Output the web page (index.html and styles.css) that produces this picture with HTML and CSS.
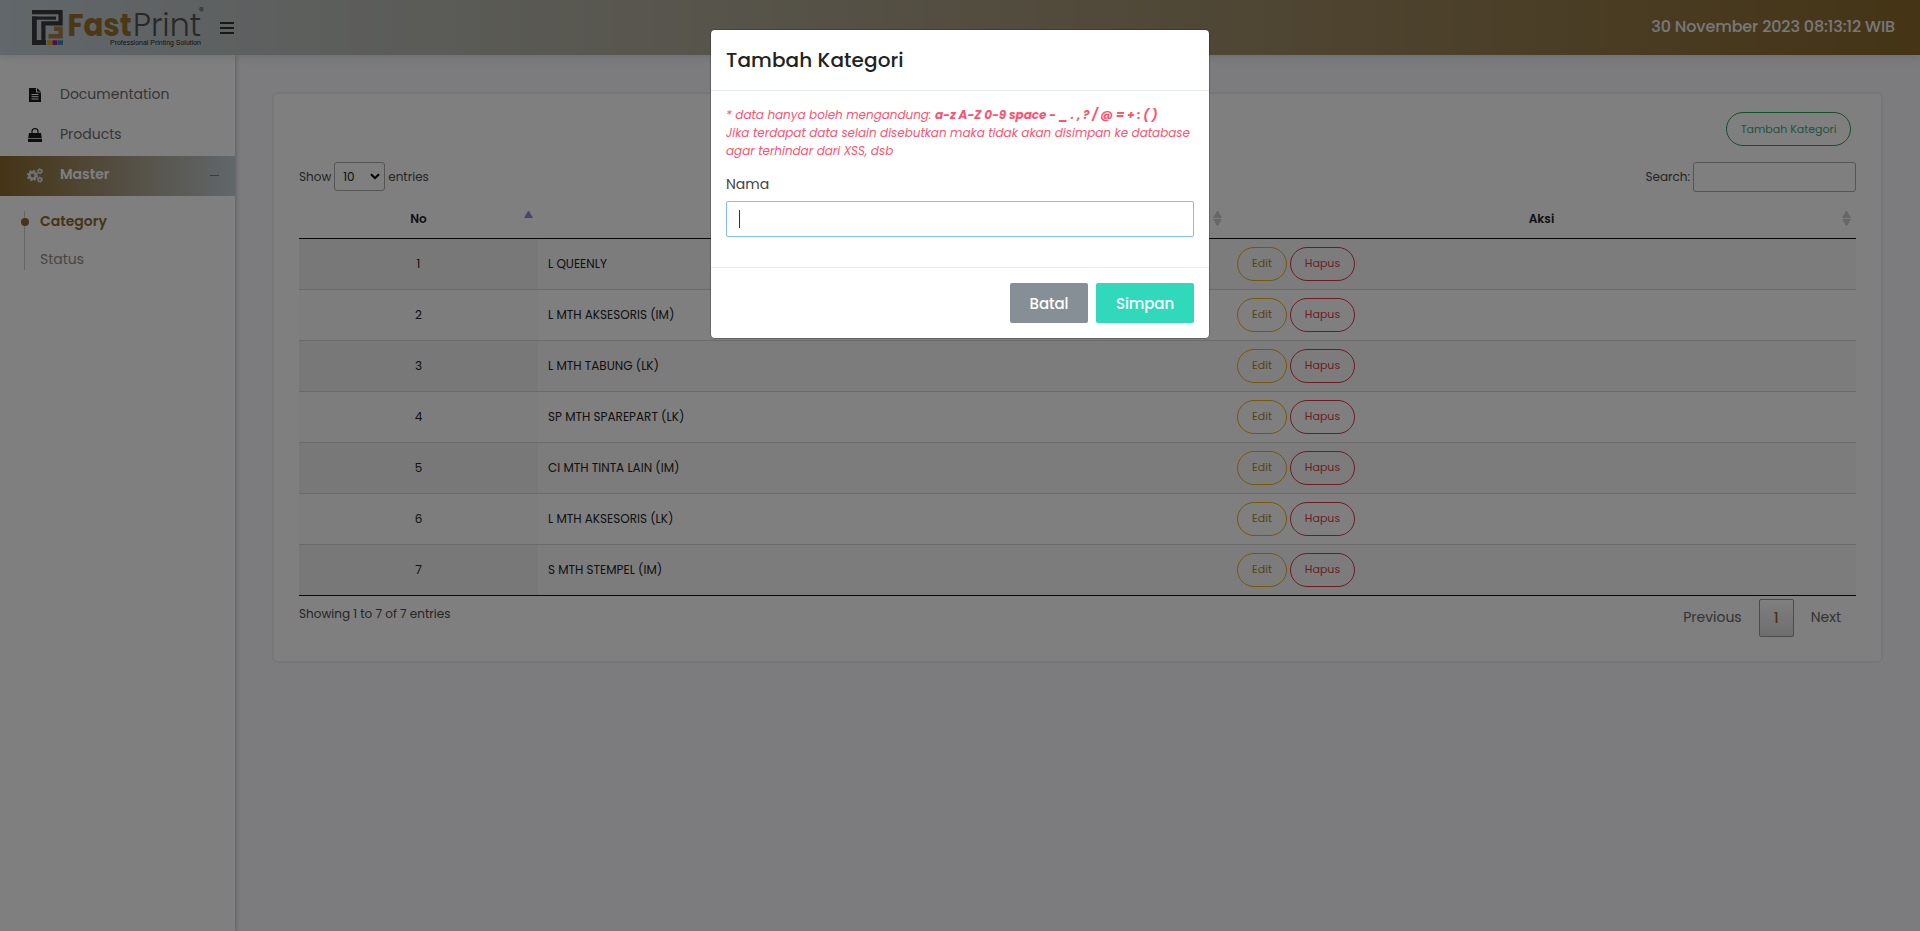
FILE: index.html
```html
<!DOCTYPE html>
<html lang="id">
<head>
<meta charset="utf-8">
<title>Kategori</title>
<link rel="stylesheet" href="styles.css">
</head>
<body>
<header class="topbar">
  <svg class="logo" width="180" height="44" viewBox="0 0 180 44">
    <g fill="none" stroke="#3a3a3a">
      <path stroke-width="4.200" d="M0 4.200H28.600V15.300H11.400V29.500"/>
      <path stroke-width="3.200" d="M0 10.100H24"/>
      <path stroke-width="4.800" d="M2.400 8.500V37M0 34.500H14"/>
      <path stroke-width="4" d="M11.400 29V36.900"/>
    </g>
    <path d="M28.600 18.500V28.300H16.500M30.800 20.700H22" fill="none" stroke="#a57b4c" stroke-width="4.400"/>
    <path fill="#d9a800" d="M15 32.300h5v4.600h-5z"/><path fill="#b5107a" d="M20.500 32.300h5v4.600h-5z"/><path fill="#2a86b9" d="M26 32.300h5v4.600h-5z"/>
    <text x="35.500" y="28" class="logo-fast" textLength="64" lengthAdjust="spacingAndGlyphs">Fast</text>
    <text x="101" y="28" class="logo-print" textLength="68" lengthAdjust="spacingAndGlyphs">Print</text>
    <text x="167" y="5" class="logo-reg">®</text>
    <text x="78" y="36.500" class="logo-tag" textLength="91" lengthAdjust="spacingAndGlyphs">Professional Printing Solution</text>
  </svg>
  <svg class="burger" width="14" height="12" viewBox="0 0 14 12"><path d="M0 1h14M0 6h14M0 11h14" stroke="#000" stroke-width="1.700"/></svg>
  <span class="clock">30 November 2023 08:13:12 WIB</span>
</header>
<div class="shell">
  <nav class="sidebar">
    <a class="nav-item"><svg width="14" height="14" viewBox="0 0 14 14"><path fill="#1b1b1b" d="M1 0h7v4.500h5V14H1zM9 0l4 3.700H9z"/><path stroke="#fff" d="M3.500 6.500h7M3.500 8.700h7M3.500 11h7"/></svg><span>Documentation</span></a>
    <a class="nav-item"><svg width="14" height="14" viewBox="0 0 14 14"><path fill="#1b1b1b" d="M1 5h12l.8 5.200H.2zM0 11h14v3H0z"/><path fill="none" stroke="#1b1b1b" stroke-width="1.200" d="M4 7V3.600a3 3 0 0 1 6 0V7"/></svg><span>Products</span></a>
    <a class="nav-item current"><svg width="17" height="15" viewBox="0 0 17 15"><g fill="none" stroke="#e4e4e4"><circle cx="5.500" cy="7.500" r="3.200" stroke-width="2.600"/><circle cx="5.500" cy="7.500" r="4.900" stroke-width="1.600" stroke-dasharray="2.100 1.750"/><circle cx="12.900" cy="3.300" r="1.700" stroke-width="1.500"/><circle cx="12.900" cy="3.300" r="2.700" stroke-width="1" stroke-dasharray="1.500 1.330"/><circle cx="12.900" cy="11.700" r="1.700" stroke-width="1.500"/><circle cx="12.900" cy="11.700" r="2.700" stroke-width="1" stroke-dasharray="1.500 1.330"/></g></svg><span>Master</span><i class="minus"></i></a>
    <div class="subnav">
      <a class="sub on">Category</a>
      <a class="sub">Status</a>
    </div>
  </nav>
  <main class="content">
    <section class="card">
      <div class="card-top"><button class="pill green">Tambah Kategori</button></div>
      <div class="controls">
        <div class="length"><span>Show</span><span class="select">10<svg width="10" height="7" viewBox="0 0 10 7"><path d="M1 1.200l4 4 4-4" fill="none" stroke="#000" stroke-width="2"/></svg></span><span>entries</span></div>
        <label class="search"><span>Search:</span><input type="text"></label>
      </div>
      <table class="grid">
        <colgroup><col class="c-no"><col class="c-name"><col class="c-act"></colgroup>
        <thead><tr>
          <th><div class="head">No<i class="asc"></i></div></th>
          <th><div class="head">Kategori<i class="both"></i></div></th>
          <th><div class="head">Aksi<i class="both"></i></div></th>
        </tr></thead>
        <tbody>
          <tr><td>1</td><td>L QUEENLY</td><td><div class="acts"><button class="pill yellow">Edit</button><button class="pill red">Hapus</button></div></td></tr>
          <tr><td>2</td><td>L MTH AKSESORIS (IM)</td><td><div class="acts"><button class="pill yellow">Edit</button><button class="pill red">Hapus</button></div></td></tr>
          <tr><td>3</td><td>L MTH TABUNG (LK)</td><td><div class="acts"><button class="pill yellow">Edit</button><button class="pill red">Hapus</button></div></td></tr>
          <tr><td>4</td><td>SP MTH SPAREPART (LK)</td><td><div class="acts"><button class="pill yellow">Edit</button><button class="pill red">Hapus</button></div></td></tr>
          <tr><td>5</td><td>CI MTH TINTA LAIN (IM)</td><td><div class="acts"><button class="pill yellow">Edit</button><button class="pill red">Hapus</button></div></td></tr>
          <tr><td>6</td><td>L MTH AKSESORIS (LK)</td><td><div class="acts"><button class="pill yellow">Edit</button><button class="pill red">Hapus</button></div></td></tr>
          <tr><td>7</td><td>S MTH STEMPEL (IM)</td><td><div class="acts"><button class="pill yellow">Edit</button><button class="pill red">Hapus</button></div></td></tr>
        </tbody>
      </table>
      <div class="foot">
        <span class="info">Showing 1 to 7 of 7 entries</span>
        <div class="pager"><span class="prev">Previous</span><span class="page">1</span><span class="next">Next</span></div>
      </div>
    </section>
  </main>
</div>
<div class="backdrop">
  <div class="modal">
    <h5 class="modal-head">Tambah Kategori</h5>
    <div class="modal-body">
      <p class="note">* data hanya boleh mengandung: <b>a-z A-Z 0-9 space - _ . , ? / @ = + : ( )</b><br>Jika terdapat data selain disebutkan maka tidak akan disimpan ke database<br>agar terhindar dari XSS, dsb</p>
      <div class="label">Nama</div>
      <div class="field"><i class="caret"></i></div>
    </div>
    <div class="modal-foot"><button class="btn gray">Batal</button><button class="btn teal">Simpan</button></div>
  </div>
</div>
</body>
</html>
```
FILE: styles.css
```css
* { box-sizing: border-box; }
body { margin: 0; height: 931px; overflow: hidden; background: #f8f8fc; font-family: Poppins, Inter, sans-serif; font-size: 13px; color: #4a4a4a; }
button, input { font-family: inherit; margin: 0; }
.topbar { position: relative; height: 55px; display: flex; align-items: flex-start; padding: 8px 25px 0 32px; background: linear-gradient(90deg, #c3ced6, #8a692c); box-shadow: 0 0 10px rgba(89,102,122,.25); z-index: 2; }
.logo { margin-right: 8px; overflow: visible; }
.logo-fast { font: 700 32px Poppins, Inter, sans-serif; fill: #94702c; }
.logo-print { font: 300 32px Poppins, Inter, sans-serif; fill: #505050; }
.logo-reg { font: 7px Inter, sans-serif; fill: #444; }
.logo-tag { font: 6.500px "Liberation Sans", sans-serif; fill: #222; }
.burger { margin-top: 14px; }
.clock { margin: 8px 0 0 auto; font-size: 16px; line-height: 21px; font-weight: 500; color: #f0f0f0; letter-spacing: -.13px; }
.shell { display: flex; height: 876px; }
.sidebar { width: 235px; padding-top: 21px; background: #fff; box-shadow: 1px 0 4px rgba(89,102,122,.4); }
.nav-item { display: flex; align-items: center; height: 40px; padding: 0 16px 4px 28px; font-size: 14px; color: #6c6c6c; }
.nav-item svg { margin-top: 2px; }
.nav-item span { margin-left: 18px; }
.nav-item.current { background: linear-gradient(90deg, #8a692c, #c3ced6); color: #fff; font-weight: 600; padding-left: 27px; }
.nav-item.current span { margin-left: 16px; }
.minus { width: 9px; height: 1px; margin: 3px 0 0 auto; background: #777; }
.subnav { margin: 15px 0 0 24px; border-left: 1px solid #ccc; height: 59px; display: flex; flex-direction: column; gap: 18px; padding-left: 15px; }
.sub { position: relative; font-size: 14px; line-height: 20px; color: #8d8d8d; }
.sub.on { font-weight: 600; color: #8a692c; }
.sub.on::before { content: ""; position: absolute; left: -19px; top: 7px; width: 8px; height: 8px; border-radius: 50%; background: #8a692c; }
.content { flex: 1; padding: 37px 37px 0; }
.card { width: 1611px; height: 571px; border: 2px solid #efeff3; border-radius: 6px; background: #fff; padding: 18px 25px; }
.card-top { display: flex; justify-content: flex-end; padding-right: 5px; height: 50px; }
.pill { height: 34px; border: 1px solid; border-radius: 17px; background: none; font-size: 11px; padding: 0; }
.green { width: 125px; color: #3da984; border-color: #29a050; }
.yellow { width: 50px; color: #a9852f; border-color: #e8b010; }
.red { width: 65px; color: #d93848; border-color: #d93848; }
.controls { display: flex; justify-content: space-between; align-items: center; height: 30px; font-size: 12px; }
.length, .search { display: flex; align-items: center; gap: 3px; }
.length { height: 29px; align-self: flex-start; }
.select { width: 51px; height: 29px; border: 1px solid #aaa; border-radius: 3px; display: flex; align-items: center; justify-content: space-between; padding: 0 4px 0 8px; color: #222; }
.search input { width: 163px; height: 30px; border: 1px solid #aaa; border-radius: 3px; background: none; }
.grid { width: 1557px; table-layout: fixed; border-collapse: collapse; margin-top: 5px; font-size: 12px; color: #222; }
.c-no { width: 239px; } .c-name { width: 689px; } .c-act { width: 629px; }
.grid thead tr { height: 41px; }
.grid th { padding: 4px 0 0; border-bottom: 1px solid #111; font-weight: 600; }
.head { position: relative; line-height: 16px; }
.head i { position: absolute; right: 5px; width: 9px; }
.asc { top: 0; border: 4.500px solid transparent; border-top: 0; border-bottom: 7px solid #8d8dde; height: 7px; }
.both { top: 0; height: 15px; }
.both::before, .both::after { content: ""; display: block; border: 4px solid transparent; }
.both::before { border-top: 0; border-bottom: 7px solid #cfcfcf; margin-bottom: 1px; }
.both::after { border-bottom: 0; border-top: 7px solid #cfcfcf; }
.grid td { height: 51px; padding: 0 10px; border-bottom: 1px solid #d5d5d5; }
.grid td:first-child { text-align: center; background: #fafafa; }
.grid tbody tr:nth-child(odd) { background: #f9f9f9; }
.grid tbody tr:nth-child(odd) td:first-child { background: #f1f1f1; }
.grid tbody tr:last-child td { border-bottom-color: #111; }
.acts { display: flex; gap: 3px; }
.foot { display: flex; justify-content: space-between; font-size: 12px; padding-top: 3px; }
.info { line-height: 30px; }
.pager { display: flex; align-items: center; height: 38px; font-size: 14px; color: #666; }
.page { width: 35px; height: 38px; line-height: 36px; margin: 0 17px; text-align: center; border: 1px solid #979797; border-radius: 2px; background: linear-gradient(#fff, #dcdcdc); color: #8a692c; font-weight: 500; }
.next { padding-right: 15px; }
.backdrop { position: absolute; inset: 0; z-index: 5; display: flex; justify-content: center; align-items: flex-start; padding-top: 30px; background: rgba(0,0,0,.5); }
.modal { width: 498px; height: 308px; border-radius: 4px; background: #fff; color: #444; box-shadow: 0 0 0 1px rgba(0,0,0,.2); }
.modal-head { margin: 0; height: 61px; padding: 0 15px; line-height: 60px; border-bottom: 1px solid #e9ecef; font-size: 20px; font-weight: 500; color: #222; letter-spacing: .1px; }
.modal-body { height: 176px; padding: 15px 15px 0; }
.note { margin: 0; font-size: 12px; line-height: 18px; font-style: italic; color: #ff5370; white-space: nowrap; letter-spacing: -.04px; }
.label { margin-top: 14px; font-size: 14px; line-height: 21px; height: 21px; }
.field { height: 36px; margin-top: 6px; border: 1px solid #80bdff; border-radius: 2px; padding: 8px 12px; }
.caret { display: block; width: 1px; height: 18px; background: #333; }
.modal-foot { height: 71px; border-top: 1px solid #e9ecef; padding: 15px; display: flex; justify-content: flex-end; gap: 8px; }
.btn { height: 40px; border: 0; border-radius: 2px; color: #fff; font-size: 15px; font-weight: 500; letter-spacing: -.1px; padding: 0; }
.gray { width: 78px; background: #868e96; } .teal { width: 98px; background: #2fd9b9; }
```
